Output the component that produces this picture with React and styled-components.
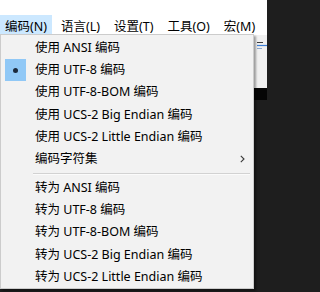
import React from "react";
import styled, { createGlobalStyle } from "styled-components";

const Global = createGlobalStyle`
  html, body { margin: 0; padding: 0; background: #1e1e1e; }
  body {
    width: 267px; height: 292px; overflow: hidden;
    font-family: "Noto Sans", "Noto Sans CJK SC", sans-serif;
  }
`;

const Window = styled.div`
  position: relative;
  width: 267px;
  height: 292px;
  display: flex;
  flex-direction: column;
  overflow: hidden;
`;

const MenuBar = styled.div`
  display: flex;
  gap: 4px;
  align-items: stretch;
  height: 35px;
  padding-top: 15px;
  box-sizing: border-box;
  background: #ffffff;
`;

const BarItem = styled.div`
  display: flex;
  align-items: center;
  padding: 0 5px;
  font-size: 12.5px;
  color: #000;
  white-space: nowrap;
  background: ${(p) => (p.$active ? "#cce8ff" : "transparent")};
`;

const Toolbar = styled.div`
  height: 53px;
  background: #f0f0f0;
  display: flex;
  justify-content: flex-end;
  align-items: flex-start;
  padding-top: 5px;
  box-sizing: border-box;
`;

const TabStrip = styled.div`
  height: 12px;
  background: #050505;
`;

const Editor = styled.div`
  flex: 1;
  background: #1e1e1e;
`;

const Dropdown = styled.div`
  position: absolute;
  top: 34px;
  left: 0;
  width: 254px;
  box-sizing: border-box;
  background: #f2f2f2;
  border: 1px solid #cccccc;
  box-shadow: 2px 2px 2px rgba(0, 0, 0, 0.35);
  padding: 2px 0 0;
  font-size: 12.5px;
  color: #000;
`;

const Item = styled.div`
  height: 22.25px;
  display: grid;
  grid-template-columns: 34px 1fr 24px;
  align-items: center;
  white-space: nowrap;
`;

const CheckCell = styled.div`
  height: 100%;
  display: flex;
  align-items: center;
  padding-left: 4px;
`;

const CheckBox = styled.div`
  width: 21px;
  height: 22px;
  background: #90c8f6;
  display: flex;
  align-items: center;
  justify-content: center;
`;

const Dot = styled.div`
  width: 5px;
  height: 5px;
  border-radius: 50%;
  background: #1c2a3c;
`;

const Label = styled.span`
  line-height: 1;
`;

const Arrow = styled.div`
  display: flex;
  align-items: center;
  padding-left: 11px;
`;

const Separator = styled.div`
  height: 6.5px;
  display: flex;
  flex-direction: column;
  justify-content: flex-start;
  padding: 2.5px 3px 0 32px;
  box-sizing: border-box;
  &::before {
    content: "";
    display: block;
    border-top: 1px solid #d2d2d2;
    border-bottom: 1px solid #fbfbfb;
  }
`;

const top = [
  { t: "使用 ANSI 编码" },
  { t: "使用 UTF-8 编码", checked: true },
  { t: "使用 UTF-8-BOM 编码" },
  { t: "使用 UCS-2 Big Endian 编码" },
  { t: "使用 UCS-2 Little Endian 编码" },
  { t: "编码字符集", sub: true },
];

const bottom = [
  "转为 ANSI 编码",
  "转为 UTF-8 编码",
  "转为 UTF-8-BOM 编码",
  "转为 UCS-2 Big Endian 编码",
  "转为 UCS-2 Little Endian 编码",
];

function Row({ text, checked, sub }) {
  return (
    <Item>
      <CheckCell>
        {checked && (
          <CheckBox>
            <Dot />
          </CheckBox>
        )}
      </CheckCell>
      <Label>{text}</Label>
      <Arrow>
        {sub && (
          <svg width="5" height="8" viewBox="0 0 5 8">
            <path d="M0.8 0.8 L4 4 L0.8 7.2" fill="none" stroke="#3a3a3a" strokeWidth="1.1" />
          </svg>
        )}
      </Arrow>
    </Item>
  );
}

export default function App() {
  return (
    <>
      <Global />
      <Window>
        <MenuBar>
          <BarItem $active>编码(N)</BarItem>
          <BarItem>语言(L)</BarItem>
          <BarItem>设置(T)</BarItem>
          <BarItem>工具(O)</BarItem>
          <BarItem>宏(M)</BarItem>
        </MenuBar>
        <Toolbar>
          <svg width="11" height="12" viewBox="0 0 11 12">
            <path d="M1 2.5 H7" stroke="#3c3c3c" strokeWidth="1" />
            <path d="M1 5.5 H11" stroke="#3d7fd6" strokeWidth="1.2" />
            <path d="M1 8.5 H6" stroke="#8aa6cc" strokeWidth="1" />
          </svg>
        </Toolbar>
        <TabStrip />
        <Editor />
        <Dropdown>
          {top.map((r) => (
            <Row key={r.t} text={r.t} checked={r.checked} sub={r.sub} />
          ))}
          <Separator />
          {bottom.map((t) => (
            <Row key={t} text={t} />
          ))}
        </Dropdown>
      </Window>
    </>
  );
}
